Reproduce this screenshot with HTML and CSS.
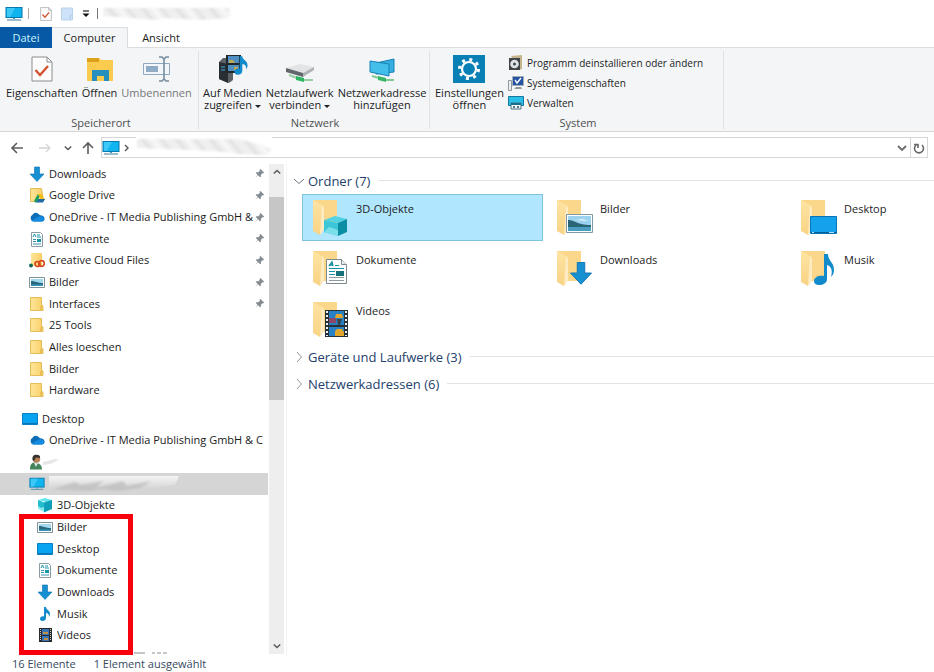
FILE: index.html
```html
<!DOCTYPE html>
<html lang="de">
<head>
<meta charset="utf-8">
<title>Computer</title>
<link rel="stylesheet" href="styles.css">
</head>
<body>
<svg class="defs" aria-hidden="true">
  <defs>
    <linearGradient id="gold" x1="0" x2="1"><stop offset="0" stop-color="#ffe599"/><stop offset="1" stop-color="#f9d067"/></linearGradient>
    <linearGradient id="smear" x1="0" y1="0" x2="0" y2="1"><stop offset="0" stop-color="#f4f4f4"/><stop offset="1" stop-color="#d2d2d2"/></linearGradient>
    <linearGradient id="flap" x1="0" y1="0" x2="0" y2="1"><stop offset="0" stop-color="#ffe4a3"/><stop offset="1" stop-color="#f8d384"/></linearGradient>
    <filter id="soft"><feGaussianBlur stdDeviation="1"/></filter>
    <pattern id="streaks" width="34" height="20" patternUnits="userSpaceOnUse" patternTransform="skewX(40)"><rect width="34" height="20" fill="#efefef"/><path d="M3 0h5v20H3zM22 0h4v20h-4z" fill="#e3e3e3"/><path d="M13 0h5v20h-5z" fill="#f7f7f7"/></pattern>
  </defs>
  <symbol id="pc" viewBox="0 0 18 16"><rect x="1" y="1.500" width="16" height="10" fill="#10b4ef" stroke="#0878ad"/><path d="M2 2h8L5 11H2z" fill="#3cc9f7"/><path d="M8 12h2v1H8z" fill="#4a9ac0"/><path d="M2 14h14" stroke="#5d92ad" stroke-width="1.200"/></symbol>
  <symbol id="down" viewBox="0 0 16 16"><path d="M5.500 1h5v7H15l-7 7.500L1 8h4.500z" fill="#1690d0" stroke="#0a70b0" stroke-width=".6"/></symbol>
  <symbol id="folder" viewBox="0 0 16 16"><path d="M1.500 1.500h11v8l1.500.5v4.500H1.500z" fill="url(#gold)" stroke="#e4bd58"/><path d="M12 14v-3.500l1-1" fill="none" stroke="#d9a93d"/></symbol>
  <symbol id="gdrive" viewBox="0 0 16 16"><path d="M1.500 1.500h11l1 6v7h-12z" fill="url(#gold)" stroke="#e4bd58"/><path d="m9 7-4 7 2 2 4-7z" fill="#15a05a"/><path d="M9 7h4l3 6h-4z" fill="#f5bd19"/><path d="M7 15.500 9 12h7l-2 3.500z" fill="#206ba5"/></symbol>
  <symbol id="cloud" viewBox="0 0 18 12"><path d="M5 11a4 4 0 0 1-1-7.500C5 1 8 .5 10 2c1 .5 2 2 2.500 2 3 0 5 1.500 5 4 0 2-1 3-3 3z" fill="#0b6db8"/><path d="m3 10 7-4c3-2 7 0 7 2.500 0 1.500-1 2.500-3 2.500H5z" fill="#148be0"/></symbol>
  <symbol id="doc" viewBox="0 0 16 16"><path d="M2.500 1.500h9l2 2v12h-11z" fill="#fff" stroke="#8b9ba3"/><path d="m4 6 1.500-3L7 6M8 4h3M8 6h4" fill="none" stroke="#1593a8"/><path d="M4 8.500h3M4 10.500h3M4 13h8" stroke="#3a91ad"/><path d="M8 8h4v3H8z" fill="#1593a8"/></symbol>
  <symbol id="cc" viewBox="0 0 16 16"><path d="M2 1h11v13H2z" fill="url(#gold)"/><circle cx="2" cy="13.500" r="2" fill="#126b55"/><circle cx="8.500" cy="12" r="2.500" fill="none" stroke="#d84b20" stroke-width="1.700"/><circle cx="12.500" cy="11.500" r="2.800" fill="none" stroke="#d84b20" stroke-width="1.700"/></symbol>
  <symbol id="pic" viewBox="0 0 16 16"><path d="M.5 3.500h15v10H.5z" fill="#fff" stroke="#7f9299"/><path d="M2 5h12v7H2z" fill="#a3d7ed"/><path d="M2 7c4 0 6 2 12 2v3H2z" fill="#276881"/><path d="M2 10.500h12V12H2z" fill="#3b93bb"/></symbol>
  <symbol id="desk" viewBox="0 0 16 16"><path d="M.5 2.500h15v11H.5z" fill="#08a3f1" stroke="#087ec3"/><path d="M1 12.500h14" stroke="#0875b6"/></symbol>
  <symbol id="user" viewBox="0 0 16 16"><path d="M1 15.500C1 10 3 8.500 6 8.500s7 2 7 7z" fill="#45845b"/><path d="m5 9 2 4 2-4z" fill="#dce5e3"/><circle cx="7.500" cy="5" r="3.700" fill="#b98055"/><path d="M3.500 6C3 2 5 .8 7.500.8s4 1.200 3.500 3.200L7 3.500 5 7z" fill="#39332f"/></symbol>
  <symbol id="cube" viewBox="0 0 16 16"><path d="m1 3 7-2 7 2-4 2.500z" fill="#65e6ef"/><path d="m1 3 6 2.500V15l-6-3z" fill="#8cebee"/><path d="m7 5.500 8-2.500v9l-8 3.500z" fill="#0f9fb8"/><path d="m1 3 6 2.500V10l-3 1-3-2z" fill="#24bdd0"/></symbol>
  <symbol id="bigcube" viewBox="0 0 26 24"><path d="m1 6 11-4 12 3-9 4z" fill="#54d2e2"/><path d="m1 6 14 3v13L1 18z" fill="#3cc6d8"/><path d="m15 9 9-4v13l-9 4z" fill="#0b8da4"/><path d="m1 18 5-5 9 3v6z" fill="#7adfe8"/></symbol>
  <symbol id="note" viewBox="0 0 16 16"><path d="M7 1h2c0 3 4 3 4 7 0 1-.5 2-1 3 0-3-1-4-3-4v5c0 2-1.500 3-3.500 3S3 14 3 12.800C3 11 5 10 7 10.500z" fill="#118bcb"/></symbol>
  <symbol id="film" viewBox="0 0 16 16"><path d="M2 1h13v14H2z" fill="#27292e"/><path d="M5 2h7v6H5zM5 9h7v5H5z" fill="#3674b4"/><path d="M6 5h5v2H6zM7 11h4v2H7z" fill="#c08e45"/><path d="M3.500 2v12M13.500 2v12" stroke="#c9cdd0" stroke-width="1" stroke-dasharray="1 1"/></symbol>
  <symbol id="pin" viewBox="0 0 12 12"><path d="m7 1 4 4-1 1-1-.3L7.500 7.500 7.500 9.500 6.500 10 4.500 8 1 11 4 7.500 2 5.500 2.500 4.500 4.700 4.500 6.500 3 6 2z" fill="#858c91"/></symbol>
  <symbol id="check" viewBox="0 0 22 26"><path d="M1 1h15l5 5v19H1z" fill="#fcfcfc" stroke="#8d8d8d"/><path d="M16 1v5h5" fill="none" stroke="#8d8d8d"/><path d="m4.500 14 4.500 5 8-9" fill="none" stroke="#d15330" stroke-width="2.400"/></symbol>
  <symbol id="big" viewBox="0 0 36 40"><path d="M1 2h24v30H9z" fill="#fbd78b"/><path d="m1 2 9 5c2 1 2 2 2 4v20l-4 6-7-4z" fill="url(#flap)"/><path d="m10 7 2 3v21l-4 6z" fill="#fdecc3"/></symbol>
  <symbol id="chev" viewBox="0 0 10 10"><path d="m1 3 4 4 4-4" fill="none" stroke="currentColor" stroke-width="1.800"/></symbol>
</svg>

<div class="window">
  <header class="titlebar">
    <svg class="i18"><use href="#pc"/></svg>
    <span class="bar"></span>
    <button class="plain" aria-label="Eigenschaften"><svg class="check-s"><use href="#check"/></svg></button>
    <button class="plain" aria-label="Neuer Ordner"><svg class="check-s" viewBox="0 0 13 14"><path d="M.5.5h12v13H.5z" fill="#cfe3f8" stroke="#b5cfe9"/><path d="M10 13V9l2-1" fill="none" stroke="#a3c4e5"/></svg></button>
    <button class="plain" aria-label="Anpassen"><svg class="more" viewBox="0 0 8 8"><path d="M1 1h6" stroke="#222" stroke-width="1.200"/><path d="M.5 3.500h7L4 7z" fill="#111"/></svg></button>
    <span class="bar dark"></span>
    <svg class="smear-t" viewBox="0 0 130 14" preserveAspectRatio="none"><path d="M1 1h126l1 10-30 2-34-2-10 2-52-4z" fill="url(#streaks)" filter="url(#soft)"/></svg>
  </header>

  <nav class="tabs">
    <a class="tab file" href="#datei">Datei</a>
    <a class="tab active" href="#computer">Computer</a>
    <a class="tab" href="#ansicht">Ansicht</a>
  </nav>

  <section class="ribbon">
    <div class="group g1">
      <div class="tools">
        <button class="tool"><svg class="ic" viewBox="0 0 32 28"><use href="#check" x="5" y="1" width="22" height="26"/></svg>Eigenschaften</button>
        <button class="tool"><svg class="ic" viewBox="0 0 32 28"><path d="M3 3h12l2 2h12v21H3z" fill="#fbcb50"/><path d="M3 3h12v4H3z" fill="#dca11b"/><path d="M8 15h17v11h-5v-5h-7v5H8z" fill="#268fbd"/></svg>Öffnen</button>
        <button class="tool off"><svg class="ic" viewBox="0 0 32 28"><path d="M2.500 8.500h26v11h-26z" fill="#f2f6fa" stroke="#8fa8bd"/><path d="M5 11h12v6H5z" fill="#8fabc6"/><path d="M18 2h3l2 2 2-2h3M23 3v22M18 26h3l2-2 2 2h3" fill="none" stroke="#768c9d" stroke-width="1.600"/></svg>Umbenennen</button>
      </div>
      <h2>Speicherort</h2>
    </div>
    <div class="group g2">
      <div class="tools">
        <button class="tool"><svg class="ic" viewBox="0 0 32 28"><path d="m3 7 4-4h10v22l-4 3-10-4z" fill="#5d6267"/><path d="m3 7 9 2v19l-9-4z" fill="#292e33"/><path d="M10 0h15v18H10z" fill="#20282f"/><path d="M12 1h11v7H12zM12 10h11v6H12z" fill="#518fc0"/><path d="M13 5h4l2 3h-6zM18 12h4v3h-4z" fill="#bda956"/><path d="M5 12h4M5 15h4" stroke="#3caee5"/><use href="#note" x="14" y="0" width="22" height="21"/></svg><span>Auf Medien</span><span>zugreifen <i></i></span></button>
        <button class="tool"><svg class="ic" viewBox="0 0 32 28"><path d="m2 13 14-4 14 3-11 6z" fill="#e3e4e5"/><path d="m2 13 17 5v4L2 17z" fill="#62676b"/><path d="m19 18 11-6v3l-11 7z" fill="#aeb3b5"/><path d="m5 20 8 3M19 25h10" stroke="#96cda1" stroke-width="2"/><path d="m12 21 8 2v4l-8-2z" fill="#2db562"/></svg><span>Netzlaufwerk</span><span>verbinden <i></i></span></button>
        <button class="tool"><svg class="ic" viewBox="0 0 32 28"><path d="m10 8 18-4v13l-18 2z" fill="#36aee2" stroke="#1681b5"/><path d="m4 6 19 3v12L4 17z" fill="#43bdea" stroke="#1681b5"/><path d="m6 21 7 2M20 25h8" stroke="#83c997" stroke-width="2"/><path d="m12 21 8 2v4l-8-2z" fill="#35b765"/></svg><span>Netzwerkadresse</span><span>hinzufügen</span></button>
      </div>
      <h2>Netzwerk</h2>
    </div>
    <div class="group g3">
      <div class="tools">
        <button class="tool"><svg class="ic" viewBox="0 0 32 28"><path d="M0 0h32v28H0z" fill="#087fb5"/><circle cx="16" cy="14" r="7" fill="none" stroke="#fff" stroke-width="2.200"/><circle cx="16" cy="14" r="9.500" fill="none" stroke="#fff" stroke-width="3" stroke-dasharray="3 4.460"/></svg><span>Einstellungen</span><span>öffnen</span></button>
        <div class="small-tools">
          <button class="small"><svg class="i16" viewBox="0 0 16 16"><path d="m3 1 11-1v14l-3 1z" fill="#c6b58c"/><path d="M1 3h11v12H1z" fill="#3f4345"/><circle cx="6.500" cy="9" r="4.300" fill="#dce2e5"/><circle cx="6.500" cy="9" r="1.500" fill="#42494f"/></svg>Programm deinstallieren oder ändern</button>
          <button class="small"><svg class="i16" viewBox="0 0 16 16"><path d="M.5 5.500h3v10h-3z" fill="#eee" stroke="#8e999f"/><path d="M4.500 1.500h11v9h-11z" fill="#2453a2" stroke="#a4aeb8"/><path d="m7 5 2 3 4-5" fill="none" stroke="#fff" stroke-width="1.400"/><path d="M8 12h5l1 2H6z" fill="#8e999f"/></svg>Systemeigenschaften</button>
          <button class="small"><svg class="i16" viewBox="0 0 16 16"><path d="M.5 1.500h15v9H.5z" fill="#29bfe8" stroke="#16779a"/><path d="M3 8h10v6H3z" fill="#f4f7f8" stroke="#4b7182"/><path d="M3 9h10" stroke="#176d8b" stroke-width="2"/><path d="M5 12h2M9 12h2" stroke="#245064" stroke-width="1.500"/></svg>Verwalten</button>
        </div>
      </div>
      <h2>System</h2>
    </div>
  </section>

  <div class="address-row">
    <button class="plain" aria-label="Zurück"><svg class="arrow" viewBox="0 0 14 14"><path d="M13 7H2m5-5L2 7l5 5" fill="none" stroke="#5d5d5d" stroke-width="1.600"/></svg></button>
    <button class="plain" aria-label="Vorwärts"><svg class="arrow" viewBox="0 0 14 14"><path d="M1 7h11M8 3l4 4-4 4" fill="none" stroke="#d5d5d5" stroke-width="1.300"/></svg></button>
    <button class="plain hist" aria-label="Verlauf"><svg class="i8"><use href="#chev"/></svg></button>
    <button class="plain" aria-label="Nach oben"><svg class="arrow" viewBox="0 0 14 14"><path d="M7 13V2M2 7l5-5 5 5" fill="none" stroke="#5d5d5d" stroke-width="1.600"/></svg></button>
    <div class="address">
      <svg class="i18"><use href="#pc"/></svg>
      <svg class="crumb" viewBox="0 0 6 8"><path d="m1 1 3 3-3 3" fill="none" stroke="#555" stroke-width="1.400"/></svg>
      <svg class="smear-a" viewBox="0 0 136 20" preserveAspectRatio="none"><path d="M0-1h136v10H0z" fill="#fff"/><path d="M1 1h100l22 5 12 5-3 6-30-1-23-3-22-1-56-2z" fill="url(#streaks)" filter="url(#soft)"/></svg>
      <button class="plain drop" aria-label="Adressen"><svg class="i10"><use href="#chev"/></svg></button>
      <button class="plain reload" aria-label="Aktualisieren"><svg class="i12" viewBox="0 0 12 12"><path d="M3 3a4.500 4.500 0 1 0 6 0M1 2.500h4V6" fill="none" stroke="#686868" stroke-width="1.600"/></svg></button>
    </div>
  </div>

  <main class="content">
    <nav class="side">
      <ul class="quick">
        <li><svg class="i16"><use href="#down"/></svg><span>Downloads</span><svg class="pin"><use href="#pin"/></svg></li>
        <li><svg class="i16"><use href="#gdrive"/></svg><span>Google Drive</span><svg class="pin"><use href="#pin"/></svg></li>
        <li><svg class="i16"><use href="#cloud"/></svg><span>OneDrive - IT Media Publishing GmbH &amp;</span><svg class="pin"><use href="#pin"/></svg></li>
        <li><svg class="i16"><use href="#doc"/></svg><span>Dokumente</span><svg class="pin"><use href="#pin"/></svg></li>
        <li><svg class="i16"><use href="#cc"/></svg><span>Creative Cloud Files</span><svg class="pin"><use href="#pin"/></svg></li>
        <li><svg class="i16"><use href="#pic"/></svg><span>Bilder</span><svg class="pin"><use href="#pin"/></svg></li>
        <li><svg class="i16"><use href="#folder"/></svg><span>Interfaces</span><svg class="pin"><use href="#pin"/></svg></li>
        <li><svg class="i16"><use href="#folder"/></svg><span>25 Tools</span></li>
        <li><svg class="i16"><use href="#folder"/></svg><span>Alles loeschen</span></li>
        <li><svg class="i16"><use href="#folder"/></svg><span>Bilder</span></li>
        <li><svg class="i16"><use href="#folder"/></svg><span>Hardware</span></li>
      </ul>
      <ul class="tree">
        <li class="l0"><svg class="i16"><use href="#desk"/></svg><span>Desktop</span></li>
        <li><svg class="i16"><use href="#cloud"/></svg><span>OneDrive - IT Media Publishing GmbH &amp; C</span></li>
        <li><svg class="i16"><use href="#user"/></svg><svg class="smear-u" viewBox="0 0 16 8"><path d="M0 4 12 1l4 1-9 4-7 1z" fill="#e6e6e6"/></svg></li>
        <li class="selected"><svg class="i16"><use href="#pc"/></svg><svg class="smear-s" viewBox="0 0 130 17" preserveAspectRatio="none"><path d="M0 1h130l-4 9-20 3-14 1-22-1-20 1-50 1z" fill="url(#smear)"/><path d="m4 14 22-7 6 3 22-4-7 7 27-7 4 5 24-5-10 7-24 3-14-2-14 2z" fill="#bcbcbc" opacity=".7" filter="url(#soft)"/></svg></li>
        <li class="l2"><svg class="i16"><use href="#cube"/></svg><span>3D-Objekte</span></li>
      </ul>
      <ul class="marked">
        <li><svg class="i16"><use href="#pic"/></svg><span>Bilder</span></li>
        <li><svg class="i16"><use href="#desk"/></svg><span>Desktop</span></li>
        <li><svg class="i16"><use href="#doc"/></svg><span>Dokumente</span></li>
        <li><svg class="i16"><use href="#down"/></svg><span>Downloads</span></li>
        <li><svg class="i16"><use href="#note"/></svg><span>Musik</span></li>
        <li><svg class="i16"><use href="#film"/></svg><span>Videos</span></li>
      </ul>
      <svg class="rest" viewBox="0 0 34 2"><path d="M0 1h11M18 1h3M23 1h4M29 1h4" stroke="#8d8d8d"/></svg>
    </nav>
    <div class="scroll">
      <button class="plain" aria-label="Nach oben scrollen"><svg class="i8 flip"><use href="#chev"/></svg></button>
      <div class="track"><div class="thumb"></div></div>
      <button class="plain" aria-label="Nach unten scrollen"><svg class="i8"><use href="#chev"/></svg></button>
    </div>
    <section class="pane">
      <h3><svg class="i10 thin" viewBox="0 0 10 10"><path d="m0 3 5 4.500L10 3" fill="none" stroke="#6e7780"/></svg>Ordner (7)</h3>
      <div class="tiles">
        <a class="tile on" href="#3d"><svg class="fold" viewBox="0 0 36 40"><use href="#big"/><use href="#bigcube" x="11" y="16" width="26" height="24"/></svg>3D-Objekte</a>
        <a class="tile" href="#bilder"><svg class="fold" viewBox="0 0 36 40"><use href="#big"/><path d="M10.500 16.500h26v18h-26z" fill="#fff" stroke="#7c99a5"/><path d="M12 18h23v15H12z" fill="#9bd2ef"/><path d="M12 22c7 0 9 5 23 5v3H12z" fill="#2b6474"/><path d="M12 29h23v4H12z" fill="#4b9ec0"/><path d="m19 22 8-1 5 2z" fill="#e7f4fa"/></svg>Bilder</a>
        <a class="tile" href="#desktop"><svg class="fold" viewBox="0 0 36 40"><use href="#big"/><path d="M10.500 18.500h26v17h-26z" fill="#15a2ed" stroke="#0874b5"/><path d="M11 34.500h25" stroke="#075f98"/><path d="M12 34.500h2m15 0h5" stroke="#b3dff7"/></svg>Desktop</a>
        <a class="tile" href="#dokumente"><svg class="fold" viewBox="0 0 36 40"><use href="#big"/><path d="M14.500 10.500h15l5 5v19h-20z" fill="#fff" stroke="#7e8b91"/><path d="M29.500 10.500v5h5" fill="#e8edf0" stroke="#7e8b91"/><path d="m17 17 3-4 1 4m-3-1h3" fill="none" stroke="#108b9d" stroke-width="1.300"/><path d="M23 16.500h4M17 19.500h15M17 22.500h6M17 25.500h6" stroke="#1594a9"/><path d="M17 28.500h15M17 31.500h15" stroke="#8c999e"/><path d="M24 22h8v5h-8z" fill="#16717a"/></svg>Dokumente</a>
        <a class="tile" href="#downloads"><svg class="fold" viewBox="0 0 36 40"><use href="#big"/><use href="#down" x="13" y="12" width="24" height="24"/></svg>Downloads</a>
        <a class="tile" href="#musik"><svg class="fold" viewBox="0 0 36 40"><use href="#big"/><path d="M24 5h4c0 7 6 8 6 16 0 3-1 5-3 7 2-7 0-11-4-12v14c0 4-4 6-8 6-3 0-5-1.500-5-4 0-4 5-6 10-5z" fill="#118bcb"/></svg>Musik</a>
        <a class="tile" href="#videos"><svg class="fold" viewBox="0 0 36 40"><use href="#big"/><path d="M13 10h23v27H13z" fill="#263037"/><path d="M17 11h15v14H17zM17 27h15v9H17z" fill="#2881c4"/><path d="M17 18h7v5h-7z" fill="#8b4765"/><path d="M24 14h6l1 4h-8zM23 31l2-2h5l2 3v4h-9z" fill="#e3a62c"/><path d="M25 19h5l-2 6h-2z" fill="#38434b"/><path d="M15 11v25M34 11v25" stroke="#eef2f4" stroke-width="2" stroke-dasharray="2 2"/></svg>Videos</a>
      </div>
      <h3><svg class="i10 thin" viewBox="0 0 10 10"><path d="m3 0 4.500 5L3 10" fill="none" stroke="#8e959b"/></svg>Geräte und Laufwerke (3)</h3>
      <h3><svg class="i10 thin" viewBox="0 0 10 10"><path d="m3 0 4.500 5L3 10" fill="none" stroke="#8e959b"/></svg>Netzwerkadressen (6)</h3>
    </section>
  </main>
  <footer class="status"><span>16 Elemente</span><span>1 Element ausgewählt</span></footer>
</div>
</body>
</html>
```
FILE: styles.css
```css
*, *::after { box-sizing: border-box; }
body { margin: 0; background: #fff; color: #1c1c1c; font: 11px/12px "Open Sans", "Noto Sans", sans-serif; }
.defs { position: absolute; width: 0; height: 0; }
svg { display: block; flex: none; overflow: visible; }
ul, h2, h3 { margin: 0; padding: 0; list-style: none; font-weight: 400; }
a { color: inherit; text-decoration: none; }
button { margin: 0; padding: 0; border: 0; background: none; color: inherit; font: inherit; }
.window { display: flex; flex-direction: column; min-height: 100vh; overflow: hidden; }
.plain { display: flex; align-items: center; justify-content: center; }
.i18 { width: 18px; height: 16px; }
.i16 { width: 16px; height: 16px; }
.i12 { width: 12px; height: 12px; }
.i10 { width: 10px; height: 10px; }
.i8 { width: 8px; height: 8px; color: #5a5a5a; }
.flip { transform: rotate(180deg); }

.titlebar { display: flex; align-items: center; height: 27px; padding-left: 5px; }
.bar { width: 1px; height: 11px; margin: 0 11px 0 5px; background: #b3aa9c; }
.bar.dark { margin: 0 4px 0 7px; background: #777; }
.check-s { width: 12px; height: 14px; margin-right: 9px; }
.more { width: 8px; height: 8px; }
.smear-t { width: 130px; height: 14px; }

.tabs { display: flex; height: 21px; line-height: 22px; text-align: center; border-bottom: 1px solid #dcdddf; }
.tab { width: 66px; height: 20px; }
.tab.file { width: 52px; height: 21px; background: #0759a5; color: #c8f4ff; }
.tab.active { width: 76px; height: 21px; background: #f3f5f7; border: 1px solid #dcdddf; border-width: 1px 1px 0 0; line-height: 20px; }

.ribbon { display: flex; height: 84px; padding: 3px 0 2px; background: #f3f5f7; border-bottom: 1px solid #d5d6d8; }
.group { display: flex; flex-direction: column; justify-content: space-between; border-right: 1px solid #dfe1e3; }
.g1 { width: 199px; padding-left: 4px; }
.g2 { width: 231px; padding-left: 2px; }
.g3 { width: 294px; padding-left: 3px; }
.tools { display: flex; align-items: flex-start; }
.tool { display: flex; flex-direction: column; align-items: center; padding: 4px 2px 0; white-space: nowrap; }
.tool i { display: inline-block; vertical-align: middle; border: 3px solid transparent; border-top-color: #222; border-bottom: 0; }
.off { color: #777; }
.ic { width: 32px; height: 28px; margin-bottom: 4px; }
.small-tools { display: flex; flex-direction: column; gap: 4px; padding: 4px 0 0 2px; font-size: 10px; }
.small { display: flex; align-items: center; gap: 3px; height: 16px; white-space: nowrap; }
.group h2 { font-size: 11px; line-height: 13px; text-align: center; color: #505050; }

.address-row { display: flex; align-items: center; height: 31px; padding: 0 6px 0 10px; }
.arrow { width: 14px; height: 14px; margin-right: 14px; }
.hist { margin: 0 9px 0 -2px; }
.hist + .plain .arrow { margin-right: 6px; }
.address { display: flex; flex: 1; align-items: center; height: 21px; border: 1px solid #d6d6d6; }
.crumb { width: 6px; height: 8px; margin: 0 6px 0 4px; }
.smear-a { width: 136px; height: 20px; }
.drop { width: 16px; margin-left: auto; color: #6c6c6c; }
.reload { width: 17px; height: 19px; border-left: 1px solid #d6d6d6; }

.content { display: flex; flex: 1; }
.side { display: flex; flex-direction: column; width: 269px; overflow: hidden; }
.side ul { display: flex; flex-direction: column; min-height: 0; }
.side li { display: flex; flex: 1 0 0; align-items: center; gap: 4px; min-height: 20px; padding-left: 29px; white-space: nowrap; }
.side li span { flex: 1; min-width: 0; overflow: hidden; line-height: 16px; }
.side .quick { flex: 11 0 0; margin-bottom: 7px; }
.side .tree { flex: 5 0 0; }
.side .marked { position: relative; flex: 6 0 0; }
.marked::after { content: ""; position: absolute; left: 19px; top: -2px; bottom: -9px; width: 114px; border: 5px solid #f8000c; }
.side li.l0 { padding-left: 22px; }
.side li.l2, .side .marked li { padding-left: 37px; }
.side li.selected { margin-right: 1px; background: #d5d5d5; }
.rest { width: 34px; height: 2px; margin: 6px 0 2px 134px; }
.pin { width: 11px; height: 11px; margin: 0 4px 0 -4px; }
.smear-u { width: 16px; height: 8px; margin-left: -6px; }
.smear-s { width: 130px; height: 17px; }
.scroll { display: flex; flex-direction: column; width: 15px; margin: 1px 0 2px; background: #eee; }
.scroll .plain { height: 16px; }
.track { flex: 1; padding-top: 17px; }
.thumb { height: 46%; background: #c6c6c6; }
.pane { flex: 1; min-width: 0; margin-left: 2px; padding: 4px 0 0 7px; border-left: 1px solid #f2f2f2; overflow: hidden; }
.pane h3 { display: flex; align-items: center; height: 27px; font-size: 13px; line-height: 18px; color: #23416b; white-space: nowrap; }
.pane h3::after { content: ""; flex: 1; height: 1px; margin-left: 8px; background: #e1e3e5; }
.thin { margin-right: 4px; }
.tiles { display: grid; grid-template-columns: repeat(3, 241px); gap: 3px; row-gap: 4px; padding-left: 8px; }
.tile { display: flex; gap: 8px; height: 47px; padding: 3px 0 0 9px; border: 1px solid transparent; line-height: 22px; }
.tile.on { background: #b0e6fe; border-color: #7fc4dd; }
.fold { width: 36px; height: 40px; }
.status { display: flex; gap: 18px; height: 16px; padding-left: 12px; line-height: 16px; color: #34495e; }
```
